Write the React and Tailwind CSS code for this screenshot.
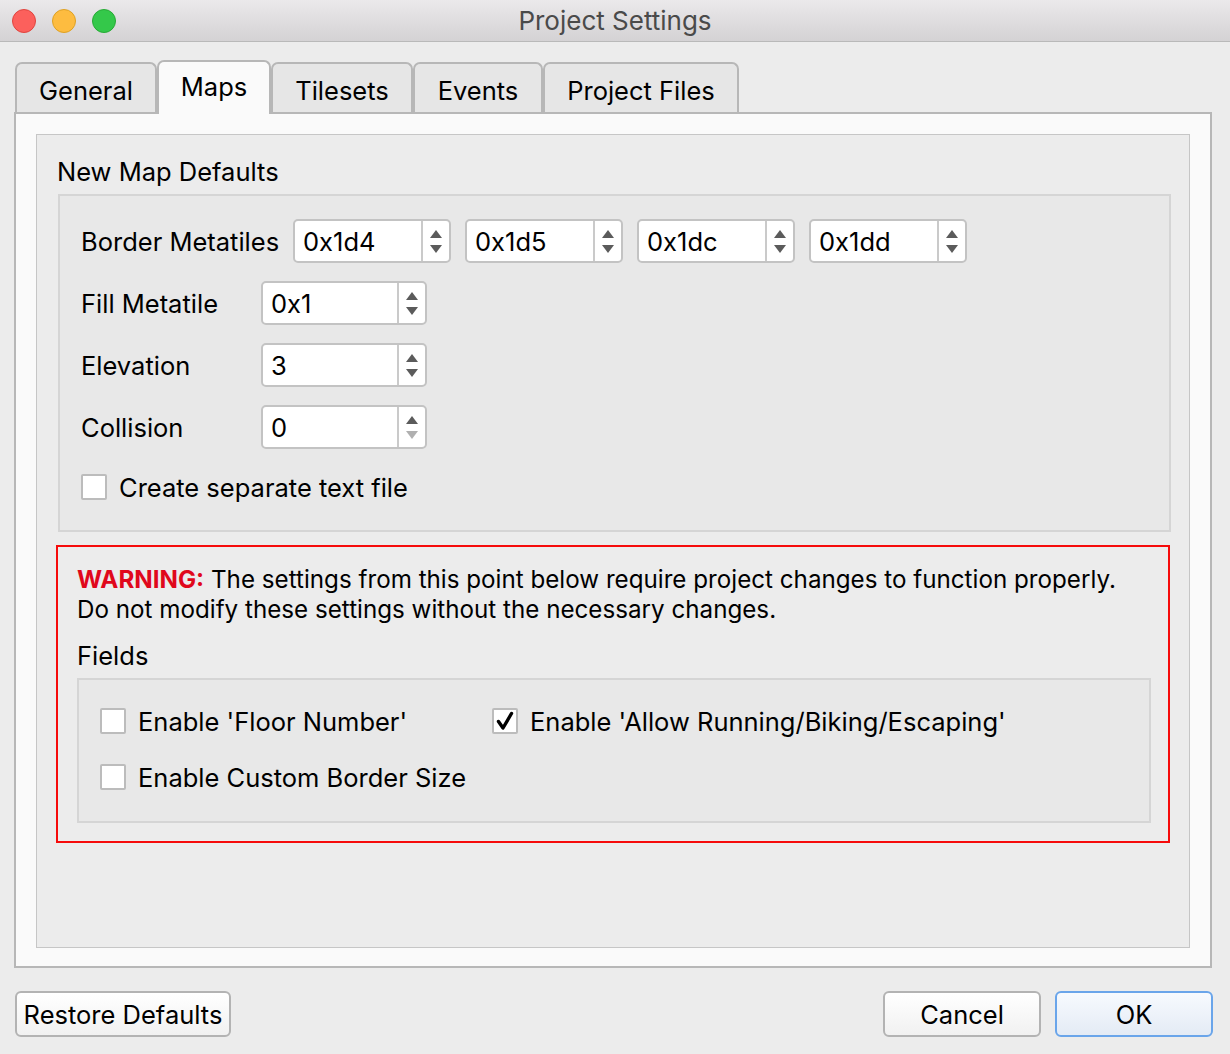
import React from "react";

const FONT = { fontFamily: "Inter, 'Liberation Sans', sans-serif" };

function Arrow({ up, color }) {
  return (
    <svg width="12" height="8" viewBox="0 0 12 8">
      {up ? (
        <path d="M6 0 L12 8 L0 8 Z" fill={color} />
      ) : (
        <path d="M0 0 L12 0 L6 8 Z" fill={color} />
      )}
    </svg>
  );
}

function Spin({ value, w, downDisabled }) {
  return (
    <div className={`flex h-[44px] ${w} rounded-[5px] border-2 border-[#c3c3c3] bg-white`}>
      <div className="flex flex-1 items-center pl-[8px] pt-[1px] text-[25.5px] leading-none text-black">{value}</div>
      <div className="flex w-[28px] flex-col items-center justify-center gap-[7px] border-l-2 border-[#cacaca]">
        <Arrow up color="#5b5b5b" />
        <Arrow color={downDisabled ? "#b0b0b0" : "#5b5b5b"} />
      </div>
    </div>
  );
}

function Check({ checked, label }) {
  return (
    <div className="flex items-center gap-[12px]">
      <div className="flex h-[26px] w-[26px] shrink-0 items-center justify-center rounded-[2px] border-2 border-[#bcbcbc] bg-white">
        {checked && (
          <svg width="22" height="22" viewBox="0 0 22 22">
            <path d="M4.5 11.5 L9 18 L17.5 3.5" fill="none" stroke="#000" strokeWidth="3.4" strokeLinecap="round" strokeLinejoin="round" />
          </svg>
        )}
      </div>
      <span className="pt-[1px] text-[25.5px] leading-none text-black">{label}</span>
    </div>
  );
}

function Tab({ label, active, w }) {
  if (active) {
    return (
      <div className={`relative z-10 -mb-[2px] flex h-[54px] ${w} items-center justify-center rounded-t-[7px] border-2 border-b-0 border-[#b7b7b7] bg-[#fafafa] pb-[1px] text-[25.5px] text-black`}>
        {label}
      </div>
    );
  }
  return (
    <div className={`flex h-[50px] ${w} items-center justify-center rounded-t-[7px] border-2 border-b-0 border-[#b7b7b7] bg-[#e6e6e6] pt-[7px] text-[25.5px] text-black`}>
      {label}
    </div>
  );
}

function Button({ label, w, primary }) {
  return (
    <div
      className={`flex h-[46px] ${w} items-center justify-center rounded-[6px] border-2 pt-[2px] text-[25.5px] text-black ${
        primary
          ? "border-[#6aa5ea] bg-gradient-to-b from-[#f7fafe] to-[#e4ebf5]"
          : "border-[#b3b3b3] bg-gradient-to-b from-[#ffffff] to-[#f1f1f1]"
      }`}
    >
      {label}
    </div>
  );
}

export default function App() {
  return (
    <div className="flex h-[1054px] w-[1230px] flex-col overflow-hidden bg-[#ececec]" style={FONT}>
      {/* Title bar */}
      <div className="grid h-[42px] shrink-0 grid-cols-[1fr_auto_1fr] items-center border-b border-[#b9b9b9] bg-gradient-to-b from-[#ebe9eb] to-[#d4d2d4]">
        <div className="flex items-center gap-[16px] pl-[12px]">
          <div className="h-[24px] w-[24px] rounded-full border border-[#e0443e] bg-[#fc605c]" />
          <div className="h-[24px] w-[24px] rounded-full border border-[#dea123] bg-[#fdbc40]" />
          <div className="h-[24px] w-[24px] rounded-full border border-[#27aa35] bg-[#34c84a]" />
        </div>
        <div className="pt-[1px] text-[26px] leading-none text-[#4a4a4a]">Project Settings</div>
        <div />
      </div>

      {/* Tabs */}
      <div className="mt-[18px] flex items-end pl-[15px]">
        <Tab label="General" w="w-[142px]" />
        <Tab label="Maps" w="w-[114px]" active />
        <Tab label="Tilesets" w="w-[142px]" />
        <Tab label="Events" w="w-[130px]" />
        <Tab label="Project Files" w="w-[196px]" />
      </div>

      {/* Pane */}
      <div className="ml-[14px] flex h-[856px] w-[1198px] flex-col border-2 border-[#b7b7b7] bg-[#fafafa] p-[20px] pb-[18px]">
        <div className="flex flex-1 flex-col border border-[#c6c6c6] bg-[#ececec] pl-[20px] pr-[18px] pt-[22px]">
          <div className="h-[30px] text-[25.5px] leading-[30px] text-black">New Map Defaults</div>

          {/* Group box */}
          <div className="ml-[1px] mt-[7px] flex flex-col border-2 border-[#d5d5d5] bg-[#e8e8e8] pb-[29px] pl-[21px] pt-[23px]">
            <div className="flex items-center">
              <span className="w-[212px] pt-[1px] text-[25.5px] leading-none text-black">Border Metatiles</span>
              <div className="flex gap-[14px]">
                <Spin value="0x1d4" w="w-[158px]" />
                <Spin value="0x1d5" w="w-[158px]" />
                <Spin value="0x1dc" w="w-[158px]" />
                <Spin value="0x1dd" w="w-[158px]" />
              </div>
            </div>
            <div className="mt-[18px] flex items-center">
              <span className="w-[180px] pt-[1px] text-[25.5px] leading-none text-black">Fill Metatile</span>
              <Spin value="0x1" w="w-[166px]" />
            </div>
            <div className="mt-[18px] flex items-center">
              <span className="w-[180px] pt-[1px] text-[25.5px] leading-none text-black">Elevation</span>
              <Spin value="3" w="w-[166px]" />
            </div>
            <div className="mt-[18px] flex items-center">
              <span className="w-[180px] pt-[1px] text-[25.5px] leading-none text-black">Collision</span>
              <Spin value="0" w="w-[166px]" downDisabled />
            </div>
            <div className="mt-[25px]">
              <Check label="Create separate text file" />
            </div>
          </div>

          {/* Warning box */}
          <div className="-ml-[1px] mr-[1px] mt-[13px] flex flex-col border-2 border-[#f60b0b] pb-[18px] pl-[19px] pr-[17px] pt-[18px]">
            <div className="text-[24.2px] leading-[30px] text-black">
              <span className="font-bold text-[#e0081c]">WARNING:</span> The settings from this point below require project changes to function properly.
              <br />
              Do not modify these settings without the necessary changes.
            </div>
            <div className="mt-[16px] h-[30px] text-[25.5px] leading-[30px] text-black">Fields</div>
            <div className="mt-[7px] flex flex-col gap-[30px] border-2 border-[#d5d5d5] bg-[#e8e8e8] pb-[30px] pl-[21px] pt-[28px]">
              <div className="grid grid-cols-[392px_auto]">
                <Check label="Enable 'Floor Number'" />
                <Check checked label="Enable 'Allow Running/Biking/Escaping'" />
              </div>
              <Check label="Enable Custom Border Size" />
            </div>
          </div>
        </div>
      </div>

      {/* Buttons */}
      <div className="mt-[23px] flex items-center pl-[15px] pr-[17px]">
        <Button label="Restore Defaults" w="w-[216px]" />
        <div className="flex-1" />
        <div className="flex gap-[14px]">
          <Button label="Cancel" w="w-[158px]" />
          <Button label="OK" w="w-[158px]" primary />
        </div>
      </div>
    </div>
  );
}
